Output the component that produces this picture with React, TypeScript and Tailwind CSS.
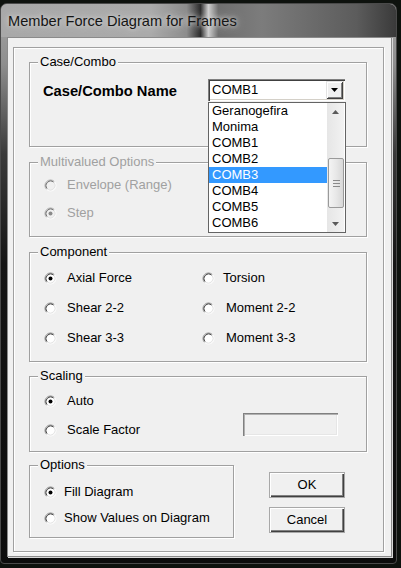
import React from "react";

const Radio = ({ checked = false, disabled = false }: { checked?: boolean; disabled?: boolean }) => (
  <svg width="13" height="13" viewBox="0 0 13 13" className="shrink-0 block">
    <circle cx="6.5" cy="6.5" r="5" fill={disabled ? "#f0f0f0" : "#ffffff"} />
    <path d="M2.61 10.39 A5.5 5.5 0 0 1 10.39 2.61" stroke={disabled ? "#a8a8a8" : "#8a8a8a"} fill="none" />
    <path d="M3.32 9.68 A4.5 4.5 0 0 1 9.68 3.32" stroke={disabled ? "#6a6a6a" : "#3c3c3c"} fill="none" />
    <path d="M10.39 2.61 A5.5 5.5 0 0 1 2.61 10.39" stroke="#ffffff" fill="none" />
    <path d="M9.68 3.32 A4.5 4.5 0 0 1 3.32 9.68" stroke="#e2e2e2" fill="none" />
    {checked && <circle cx="6.5" cy="6.5" r="2" fill={disabled ? "#8a8a8a" : "#000000"} />}
  </svg>
);

const Group = ({
  label,
  className = "",
  disabled = false,
  children,
}: {
  label: string;
  className?: string;
  disabled?: boolean;
  children?: React.ReactNode;
}) => (
  <div className={`relative border border-[#a0a0a0] shadow-[inset_1px_1px_0_#ffffff,1px_1px_0_#ffffff] ${className}`}>
    <span
      className={`absolute left-[8px] top-[-9px] bg-[#f0f0f0] px-[2px] leading-[16px] whitespace-nowrap ${
        disabled ? "text-[#a0a0a0]" : "text-black"
      }`}
    >
      {label}
    </span>
    {children}
  </div>
);

const RadioRow = ({
  label,
  checked,
  disabled,
  gap = "ml-[10px]",
}: {
  label: string;
  checked?: boolean;
  disabled?: boolean;
  gap?: string;
}) => (
  <div className="flex items-center h-[16px]">
    <Radio checked={checked} disabled={disabled} />
    <span className={`${gap} leading-[16px] whitespace-nowrap ${disabled ? "text-[#a0a0a0]" : "text-black"}`}>{label}</span>
  </div>
);

const items = ["Geranogefira", "Monima", "COMB1", "COMB2", "COMB3", "COMB4", "COMB5", "COMB6"];

export default function App() {
  return (
    <div className="w-[401px] h-[568px] overflow-hidden bg-[#0e120e] font-['Liberation_Sans',Arial,sans-serif] text-[13px] text-black">
      <div className="mt-[3px] w-[397px] h-[561px] rounded-t-[7px] rounded-b-[4px] border border-[#4a4a4a] bg-[linear-gradient(180deg,#a6a6a6_0px,#8e8e8e_60px,#3a3a3a_150px,#151515_260px,#0c0c0c_100%)] flex flex-col overflow-hidden">
        <div className="h-[33px] shrink-0 flex items-center pl-[7px] rounded-t-[6px] bg-[linear-gradient(90deg,#a8a8a8_0%,#aaaaaa_38%,#8c8c8c_47%,#2c2c2c_50.5%,#cfcfcf_52.5%,#6f6f6f_55%,#7c7c7c_66%,#5c5c5c_90%,#3a3a3a_100%)]">
          <span className="relative top-[1px] text-[14.6px] text-[#151515] font-['Liberation_Sans',Arial,sans-serif] [text-shadow:0_0_8px_#d8d8d8,0_0_4px_#d0d0d0] whitespace-nowrap">
            Member Force Diagram for Frames
          </span>
        </div>
        <div className="ml-[6px] w-[385px] h-[520px] shrink-0 bg-[#f0f0f0] border border-[#8a8a8a] shadow-[1px_1px_0_#d8d8d8]">
          <div className="ml-[5px] mt-[9px] w-[371px] h-[505px] border border-[#a0a0a0] shadow-[inset_1px_1px_0_#ffffff,1px_1px_0_#ffffff] pl-[15px] pt-[14px]">
            {/* Case/Combo */}
            <Group label="Case/Combo" className="w-[338px] h-[85px] z-10">
              <div className="mt-[16px] flex items-center justify-between pl-[13px] pr-[21px]">
                <span className="font-bold text-[14.7px] leading-[22px] relative top-[1px]">Case/Combo Name</span>
                <div className="relative w-[137px] h-[22px] bg-white shadow-[inset_1px_1px_0_#808080,inset_2px_2px_0_#404040,inset_-1px_-1px_0_#ffffff,inset_-2px_-2px_0_#d4d0c8]">
                  <div className="h-full flex items-center pl-[4px] leading-[16px]">COMB1</div>
                  <div className="absolute right-[2px] top-[2px] w-[17px] h-[18px] bg-[#f0f0f0] shadow-[inset_1px_1px_0_#e3e3e3,inset_-1px_-1px_0_#404040,inset_2px_2px_0_#ffffff,inset_-2px_-2px_0_#808080] flex items-center justify-center">
                    <svg width="7" height="4" viewBox="0 0 7 4" className="block">
                      <path d="M0 0 H7 L3.5 4 Z" fill="#000" />
                    </svg>
                  </div>
                  {/* Dropdown list */}
                  <div className="absolute left-0 top-[23px] w-[138px] h-[131px] bg-white border border-[#646464] flex z-20">
                    <div className="w-[118px] flex flex-col">
                      {items.map((it) => (
                        <div
                          key={it}
                          className={`h-[16px] leading-[16px] pl-[3px] text-[13px] ${
                            it === "COMB3" ? "bg-[#3399ff] text-white" : "text-black"
                          }`}
                        >
                          {it}
                        </div>
                      ))}
                    </div>
                    <div className="relative w-[17px] h-full bg-[linear-gradient(90deg,#e6e6e6,#f2f2f2)]">
                      <div className="h-[17px] flex items-center justify-center">
                        <svg width="7" height="4" viewBox="0 0 7 4" className="block">
                          <path d="M0 4 H7 L3.5 0 Z" fill="#5a5a5a" />
                        </svg>
                      </div>
                      <div className="absolute left-[1px] top-[55px] w-[16px] h-[50px] rounded-[2px] border border-[#9a9a9a] bg-[linear-gradient(90deg,#f4f4f4,#e8e8e8_50%,#d8d8d8)] flex flex-col items-center justify-center gap-[2px]">
                        <div className="w-[7px] h-[1px] bg-[#8a8a8a]" />
                        <div className="w-[7px] h-[1px] bg-[#8a8a8a]" />
                        <div className="w-[7px] h-[1px] bg-[#8a8a8a]" />
                      </div>
                      <div className="absolute bottom-0 left-0 w-[17px] h-[17px] flex items-center justify-center">
                        <svg width="7" height="4" viewBox="0 0 7 4" className="block">
                          <path d="M0 0 H7 L3.5 4 Z" fill="#5a5a5a" />
                        </svg>
                      </div>
                    </div>
                  </div>
                </div>
              </div>
            </Group>

            {/* Multivalued */}
            <Group label="Multivalued Options" disabled className="mt-[15px] w-[338px] h-[75px]">
              <div className="pl-[14px] pt-[14px] flex flex-col gap-[12px]">
                <RadioRow label="Envelope (Range)" disabled />
                <RadioRow label="Step" disabled checked />
              </div>
            </Group>

            {/* Component */}
            <Group label="Component" className="mt-[15px] w-[338px] h-[110px]">
              <div className="pl-[14px] pt-[17px] flex flex-col gap-[14px]">
                <div className="flex">
                  <div className="w-[158px]">
                    <RadioRow label="Axial Force" checked />
                  </div>
                  <RadioRow label="Torsion" gap="ml-[8px]" />
                </div>
                <div className="flex">
                  <div className="w-[158px]">
                    <RadioRow label="Shear 2-2" />
                  </div>
                  <RadioRow label="Moment 2-2" gap="ml-[11px]" />
                </div>
                <div className="flex">
                  <div className="w-[158px]">
                    <RadioRow label="Shear 3-3" />
                  </div>
                  <RadioRow label="Moment 3-3" gap="ml-[11px]" />
                </div>
              </div>
            </Group>

            {/* Scaling */}
            <Group label="Scaling" className="mt-[14px] w-[338px] h-[76px]">
              <div className="flex">
                <div className="pl-[14px] pt-[16px] flex flex-col gap-[13px]">
                  <RadioRow label="Auto" checked />
                  <RadioRow label="Scale Factor" />
                </div>
                <div className="ml-auto mr-[28px] mt-[36px] w-[95px] h-[23px] bg-[#f0f0f0] shadow-[inset_1px_1px_0_#808080,inset_2px_2px_0_#b0b0b0,inset_-1px_-1px_0_#ffffff,inset_-2px_-2px_0_#e6e6e6]" />
              </div>
            </Group>

            {/* Options + buttons */}
            <div className="mt-[13px] flex">
              <Group label="Options" className="w-[205px] h-[73px]">
                <div className="pl-[14px] pt-[18px] flex flex-col gap-[10px]">
                  <RadioRow label="Fill Diagram" checked gap="ml-[7px]" />
                  <RadioRow label="Show Values on Diagram" gap="ml-[7px]" />
                </div>
              </Group>
              <div className="ml-[36px] mt-[8px] flex flex-col gap-[11px]">
                <button className="w-[74px] h-[24px] bg-[#f0f0f0] text-[13px] text-black shadow-[inset_1px_1px_0_#ffffff,inset_-1px_-1px_0_#404040,inset_-2px_-2px_0_#808080,0_0_0_1px_#a8a8a8] flex items-center justify-center">
                  OK
                </button>
                <button className="w-[74px] h-[24px] bg-[#f0f0f0] text-[13px] text-black shadow-[inset_1px_1px_0_#ffffff,inset_-1px_-1px_0_#404040,inset_-2px_-2px_0_#808080,0_0_0_1px_#a8a8a8] flex items-center justify-center">
                  Cancel
                </button>
              </div>
            </div>
          </div>
        </div>
      </div>
    </div>
  );
}
